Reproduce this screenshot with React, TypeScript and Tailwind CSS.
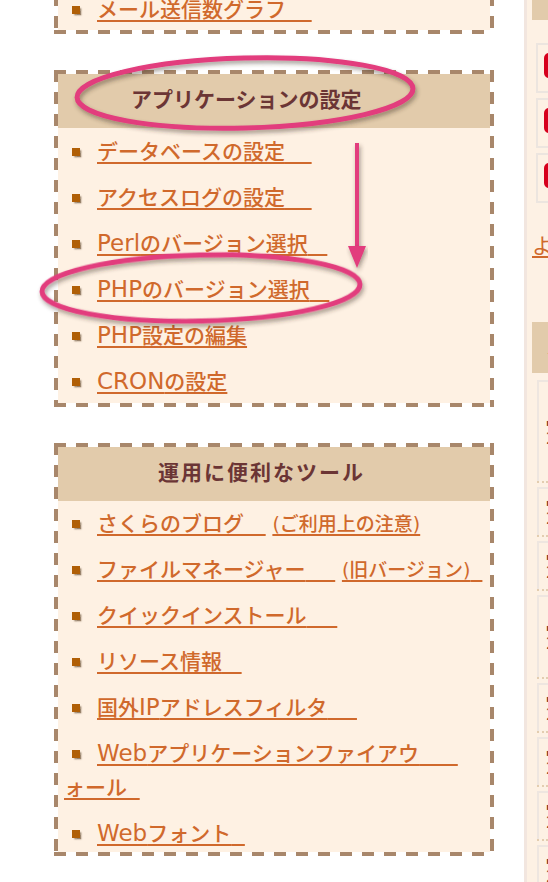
import React from "react";

function Bullet() {
  return (
    <span className="inline-block w-2 h-2 ml-2 mr-[17px] bg-[#b05f06] shadow-[1.5px_1.5px_1.5px_rgba(70,40,10,0.55)] align-middle relative -top-[1px]" />
  );
}

function L({ children, tr }: { children: React.ReactNode; tr?: string }) {
  return (
    <a
      href="#"
      className="text-[#d0692c] underline decoration-2 underline-offset-[3px]"
    >
      {children}
      {tr ? <span className={tr}>{"\u00a0"}</span> : null}
    </a>
  );
}

function E({ children }: { children: React.ReactNode }) {
  return <span className="text-[23px] leading-[20px]">{children}</span>;
}

const DASH =
  "[background:repeating-linear-gradient(90deg,#a8876b_0_12px,transparent_12px_22px)_top_left/100%_4px_no-repeat,repeating-linear-gradient(90deg,#a8876b_0_12px,transparent_12px_22px)_bottom_left/100%_4px_no-repeat,repeating-linear-gradient(180deg,#a8876b_0_12px,transparent_12px_22px)_top_left/4px_100%_no-repeat,repeating-linear-gradient(180deg,#a8876b_0_12px,transparent_12px_22px)_top_right/4px_100%_no-repeat]";

function Box({
  title,
  titleCls,
  listCls,
  className,
  children,
}: {
  title: string;
  titleCls: string;
  listCls: string;
  className?: string;
  children: React.ReactNode;
}) {
  return (
    <div className={"w-[440px] p-[4px] " + DASH + " " + (className ?? "")}>
      <div className="bg-[#fef1e3]">
        <div
          className={
            "h-[54px] flex items-center bg-[#e2cbab] font-bold text-[21px] text-[#6b3535] " +
            titleCls
          }
        >
          {title}
        </div>
        <ul className={"flex flex-col gap-3 px-[6px] " + listCls}>{children}</ul>
      </div>
    </div>
  );
}

function Li({ children }: { children: React.ReactNode }) {
  return (
    <li className="h-[34px] leading-[34px] text-[21px] font-medium">
      <Bullet />
      {children}
    </li>
  );
}

const rowHeights = [
  "h-[101px]",
  "h-[48px]",
  "h-[48px]",
  "h-[82px]",
  "h-[48px]",
  "h-[48px]",
  "h-[48px]",
  "h-[48px]",
];

export default function App() {
  return (
    <div className="relative w-[548px] h-[882px] overflow-hidden bg-white [font-family:'DejaVu_Sans','Noto_Sans_CJK_JP',sans-serif]">
      <div className="flex h-full">
        {/* left column */}
        <div className="w-[524px] shrink-0 pl-[54px]">
          <Box
            title="メール設定"
            titleCls="pl-[100px]"
            listCls="pt-[7px] pb-[3px]"
            className="-mt-[72px]"
          >
            <Li>
              <L tr="tracking-[19px]">メール送信数グラフ</L>
            </Li>
          </Box>

          <Box
            title="アプリケーションの設定"
            titleCls="pl-[73px]"
            listCls="pt-[7px] pb-[4px]"
            className="mt-9"
          >
            <Li>
              <L tr="tracking-[20px]">データベースの設定</L>
            </Li>
            <Li>
              <L tr="tracking-[20px]">アクセスログの設定</L>
            </Li>
            <Li>
              <L tr="tracking-[13px]">
                <E>Perl</E>のバージョン選択
              </L>
            </Li>
            <Li>
              <L tr="tracking-[13px]">
                <E>PHP</E>のバージョン選択
              </L>
            </Li>
            <Li>
              <L>
                <E>PHP</E>設定の編集
              </L>
            </Li>
            <Li>
              <L>
                <E>CRON</E>の設定
              </L>
            </Li>
          </Box>

          <Box
            title="運用に便利なツール"
            titleCls="pl-[100px] tracking-[2px]"
            listCls="pt-[6px] pb-[1px]"
            className="mt-9"
          >
            <Li>
              <L tr="tracking-[15px]">さくらのブログ</L>{" "}
              <a
                href="#"
                className="text-[#d0692c] underline decoration-2 underline-offset-[3px] text-[19px]"
              >
                (ご利用上の注意)
              </a>
            </Li>
            <Li>
              <L tr="tracking-[23px]">ファイルマネージャー</L>{" "}
              <a
                href="#"
                className="text-[#d0692c] underline decoration-2 underline-offset-[3px] text-[19px]"
              >
                (旧バージョン)<span className="tracking-[6px]">{"\u00a0"}</span>
              </a>
            </Li>
            <Li>
              <L tr="tracking-[24px]">クイックインストール</L>
            </Li>
            <Li>
              <L tr="tracking-[13px]">リソース情報</L>
            </Li>
            <Li>
              <L tr="tracking-[23px]">
                国外<E>IP</E>アドレスフィルタ
              </L>
            </Li>
            <li className="leading-[34px] text-[21px] font-medium">
              <span className="whitespace-nowrap">
                <Bullet />
                <L tr="tracking-[32px]">
                  <E>Web</E>アプリケーションファイアウ
                </L>
              </span>
              <br />
              <L tr="tracking-[6px]">ォール</L>
            </li>
            <Li>
              <L tr="tracking-[7px]">
                <E>Web</E>フォント
              </L>
            </Li>
          </Box>
        </div>

        {/* right column */}
        <div className="w-[300px] shrink-0 h-full border-l-[3px] border-[#f2e6df] bg-[#fdf1e4] pl-[5px]">
          <div className="-mt-[40px] h-[60px] flex items-end pb-[13px] pl-[14px] bg-[#e2cbab] font-bold text-[18px] text-[#6b3535]">
            サポート情報
          </div>
          <div className="mt-[23px] ml-[4px] flex flex-col gap-[5px]">
            {["重要なお知らせ", "メンテナンス情報", "障害情報"].map((t) => (
              <div key={t} className="h-[50px] border-2 border-[#ece5df] pl-[6px] pt-[8px]">
                <div className="h-[25px] w-[160px] rounded-[5px] bg-[#d6001c] text-white text-[14px] leading-[25px] pl-2">
                  {t}
                </div>
              </div>
            ))}
          </div>
          <div className="mt-[26px] leading-[34px] text-[21px]">
            <a href="#" className="text-[#d0692c] underline decoration-2 underline-offset-[3px]">
              よくある質問
            </a>
          </div>
          <div className="mt-[59px] h-[51px] flex items-center pl-[14px] bg-[#e2cbab] font-bold text-[18px] text-[#6b3535]">
            メンテナンス・障害情報
          </div>
          <div className="mt-[7px] ml-[5px] flex flex-col">
            {rowHeights.map((h, i) => (
              <div
                key={i}
                className={
                  (i === 0 ? "" : "pt-[4px] ") +
                  "border-b-2 border-dotted border-[#e3cdb0]"
                }
              >
                <div
                  className={
                    h +
                    " border-t-2 border-l-2 border-[#eee6e0] flex flex-col justify-center pl-[7px] text-[#7d3b2d]"
                  }
                >
                  <div className="text-[10px] leading-[14px]">▪ 2019年</div>
                  <div className="text-[15px] leading-[18px]">2019/07/{10 + i}</div>
                </div>
              </div>
            ))}
          </div>
        </div>
      </div>

      {/* annotation overlay */}
      <svg
        className="absolute left-0 top-0 pointer-events-none"
        width="548"
        height="882"
        viewBox="0 0 548 882"
      >
        <defs>
          <filter id="sh" x="-10%" y="-20%" width="120%" height="150%">
            <feDropShadow dx="1.5" dy="3" stdDeviation="2" floodColor="#3a2a20" floodOpacity="0.45" />
          </filter>
        </defs>
        <g filter="url(#sh)" fill="none" stroke="#e23c7d" strokeWidth="5">
          <ellipse cx="245" cy="93" rx="168" ry="35" transform="rotate(-1.5 245 93)" />
          <ellipse cx="201" cy="288" rx="159" ry="33" transform="rotate(-1.3 201 288)" />
          <line x1="357" y1="143" x2="357" y2="250" strokeWidth="4" />
        </g>
        <polygon points="348,246 366,246 357,268" fill="#e23c7d" filter="url(#sh)" />
      </svg>
    </div>
  );
}
